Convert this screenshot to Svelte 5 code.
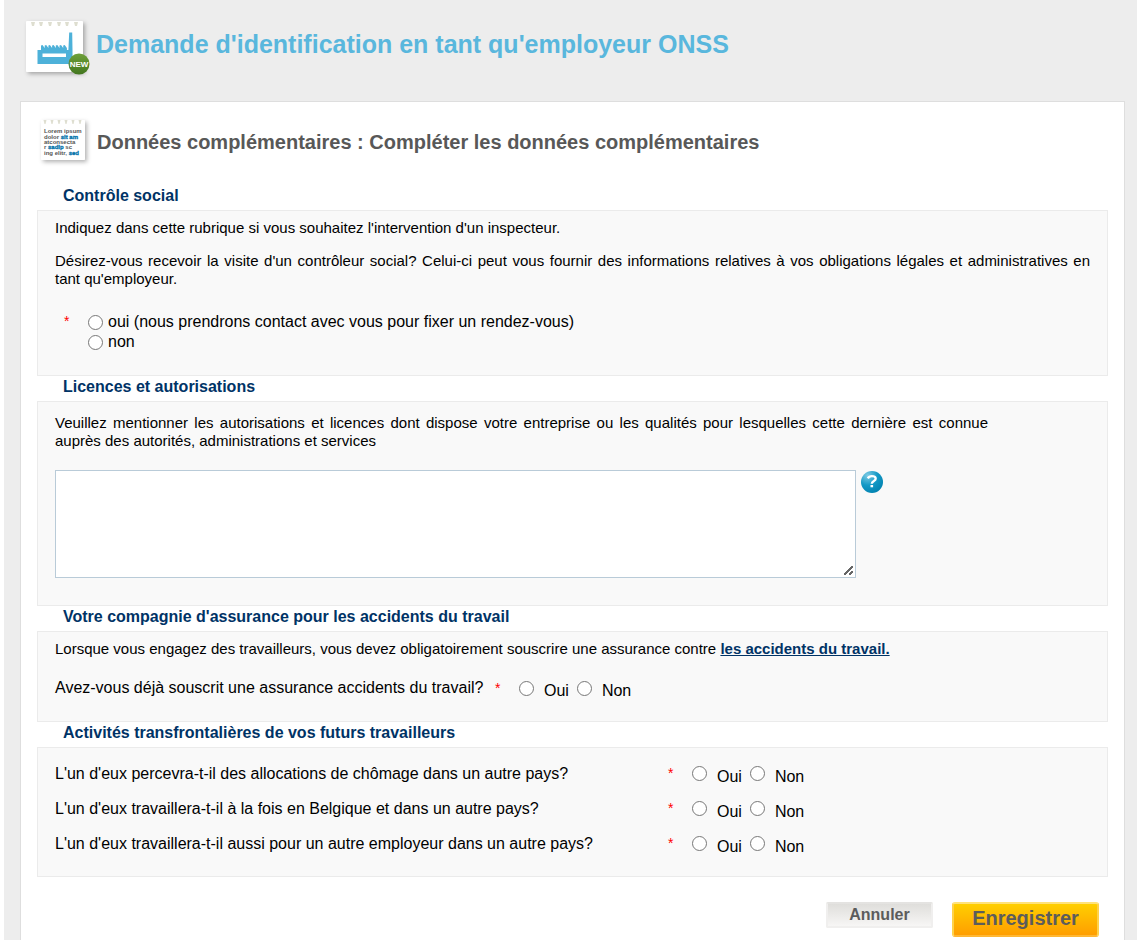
<script>
    const questions = [
        { id: "chomage", label: "L'un d'eux percevra-t-il des allocations de chômage dans un autre pays?" },
        { id: "belgique", label: "L'un d'eux travaillera-t-il à la fois en Belgique et dans un autre pays?" },
        { id: "employeur", label: "L'un d'eux travaillera-t-il aussi pour un autre employeur dans un autre pays?" },
    ];

    let visite = $state("");
    let licences = $state("");
    let assurance = $state("");
    let activites = $state({ chomage: "", belgique: "", employeur: "" });
</script>

<div class="page">
    <header>
        <svg class="page-icon" width="72" height="66" viewBox="0 0 72 66" aria-hidden="true">
            <defs>
                <linearGradient id="badge" x1="0" y1="0" x2="0" y2="1">
                    <stop offset="0" stop-color="#6fa03a" />
                    <stop offset="1" stop-color="#42761f" />
                </linearGradient>
                <filter id="shadow" x="-20%" y="-20%" width="150%" height="150%">
                    <feDropShadow dx="2" dy="2" stdDeviation="2" flood-opacity="0.3" />
                </filter>
            </defs>
            <rect x="6" y="7" width="57" height="51" rx="1" fill="#fff" filter="url(#shadow)" />
            <g fill="#deded0">
                {#each [13, 21, 30, 39, 47, 56] as x}
                    <path d="M{x - 2} 8h4l-1 4h-2z" />
                {/each}
            </g>
            <path
                fill="#4db1d9"
                fill-rule="evenodd"
                d="M17.500 50V36H21v-4.500l1.500-.5 2.200 3V31.500l1.500-.5 2.200 3V31.500l1.500-.5 2.200 3V31.500l1.500-.5 2.200 3V31.500l1.500-.5 2.200 3V31.500l1.500-.5 2.200 3V31.500l1.500-.5 2.200 3V36h1.500l.8-17.500h3L52.500 36v14zM22.500 39.500v3.500H46v-3.500z"
            />
            <circle cx="59" cy="50" r="10.500" fill="url(#badge)" />
            <text x="59" y="53" text-anchor="middle" class="badge-text">NEW</text>
        </svg>
        <h1>Demande d'identification en tant qu'employeur ONSS</h1>
    </header>

    <main>
        <div class="step">
            <svg width="58" height="54" viewBox="0 0 58 54" aria-hidden="true">
                <rect x="4" y="4" width="44" height="40" rx="1" fill="#fff" filter="url(#shadow)" />
                <g fill="#deded0">
                    {#each [8, 15, 22, 29, 36, 43] as x}
                        <path d="M{x - 1.5} 4h3l-1 4h-1z" />
                    {/each}
                </g>
                <g class="note">
                    <text x="7" y="17">Lorem ipsum</text>
                    <text x="7" y="23">dolor <tspan>sit am</tspan></text>
                    <text x="7" y="28">atconsecta</text>
                    <text x="7" y="33">r <tspan>sadip</tspan> sc</text>
                    <text x="7" y="39">ing elitr, <tspan>sed</tspan></text>
                </g>
            </svg>
            <h2>Données complémentaires : Compléter les données complémentaires</h2>
        </div>

        <form onsubmit={(e) => e.preventDefault()}>
            <h3 id="controle">Contrôle social</h3>
            <section class="controle">
                <p>Indiquez dans cette rubrique si vous souhaitez l'intervention d'un inspecteur.</p>
                <p class="demand">
                    Désirez-vous recevoir la visite d'un contrôleur social? Celui-ci peut vous fournir des informations
                    relatives à vos obligations légales et administratives en tant qu'employeur.
                </p>
                <div class="visit" role="radiogroup" aria-labelledby="controle">
                    <span class="star">*</span>
                    <div>
                        <label>
                            <input type="radio" name="visite" value="oui" bind:group={visite} />
                            <span>oui (nous prendrons contact avec vous pour fixer un rendez-vous)</span>
                        </label>
                        <label>
                            <input type="radio" name="visite" value="non" bind:group={visite} />
                            <span>non</span>
                        </label>
                    </div>
                </div>
            </section>

            <h3>Licences et autorisations</h3>
            <section class="licences">
                <label class="intro" for="licences">
                    Veuillez mentionner les autorisations et licences dont dispose votre entreprise ou les qualités pour
                    lesquelles cette dernière est connue auprès des autorités, administrations et services
                </label>
                <div class="area">
                    <textarea id="licences" bind:value={licences}></textarea>
                    <button type="button" class="help" aria-label="Aide">
                        <svg width="24" height="24" viewBox="0 0 24 24" aria-hidden="true">
                            <defs>
                                <radialGradient id="ball" cx="0.3" cy="0.2" r="0.9">
                                    <stop offset="0" stop-color="#7dcbe4" />
                                    <stop offset="0.5" stop-color="#1499c6" />
                                    <stop offset="1" stop-color="#0080ae" />
                                </radialGradient>
                            </defs>
                            <circle cx="12" cy="12" r="11" fill="url(#ball)" />
                            <path
                                d="M7.800 8.400C8.600 6.900 10 6.200 11.800 6.200c2.300 0 3.900.9 3.900 2.600 0 2.200-3.900 2.300-3.900 4.900"
                                fill="none"
                                stroke="#fff"
                                stroke-width="2.300"
                            />
                            <rect x="10.500" y="15" width="2.600" height="2.300" fill="#fff" />
                        </svg>
                    </button>
                </div>
            </section>

            <h3>Votre compagnie d'assurance pour les accidents du travail</h3>
            <section class="assurance">
                <p>
                    Lorsque vous engagez des travailleurs, vous devez obligatoirement souscrire une assurance contre
                    <a href="#accidents">les accidents du travail.</a>
                </p>
                <div class="inline" role="radiogroup" aria-labelledby="q-assurance">
                    <span id="q-assurance">Avez-vous déjà souscrit une assurance accidents du travail?</span>
                    <span class="star">*</span>
                    <div class="choices">
                        <label><input type="radio" name="assurance" value="oui" bind:group={assurance} /><span>Oui</span></label>
                        <label><input type="radio" name="assurance" value="non" bind:group={assurance} /><span>Non</span></label>
                    </div>
                </div>
            </section>

            <h3>Activités transfrontalières de vos futurs travailleurs</h3>
            <section class="activites">
                {#each questions as q (q.id)}
                    <div class="question" role="radiogroup" aria-labelledby="q-{q.id}">
                        <span id="q-{q.id}">{q.label}</span>
                        <span class="star">*</span>
                        <div class="choices">
                            <label><input type="radio" name={q.id} value="oui" bind:group={activites[q.id]} /><span>Oui</span></label>
                            <label><input type="radio" name={q.id} value="non" bind:group={activites[q.id]} /><span>Non</span></label>
                        </div>
                    </div>
                {/each}
            </section>

            <div class="actions">
                <button type="button" class="cancel">Annuler</button>
                <button type="submit" class="save">Enregistrer</button>
            </div>
        </form>
    </main>
</div>

<style>
    :global(body) {
        background: #fff;
        font-family: "Liberation Sans", Arial, sans-serif;
        color: #000;
    }

    * {
        box-sizing: border-box;
    }

    .page {
        display: flex;
        flex-direction: column;
        min-height: 100vh;
        margin-left: 4px;
        padding: 0 12px 0 16px;
        background: #ededed;
    }

    header {
        display: flex;
        height: 101px;
        padding-top: 14px;
    }

    h1,
    h2,
    h3,
    p {
        margin: 0;
    }

    h1 {
        padding-top: 15px;
        margin-left: 4px;
        font-size: 25px;
        line-height: 30px;
        color: #59b7dd;
    }

    .badge-text {
        font-size: 8px;
        font-weight: bold;
        fill: #fff;
    }

    main {
        flex: 1;
        padding: 14px 16px 3px;
        background: #fff;
        border: 1px solid #dedede;
        border-bottom: 0;
    }

    .step {
        display: flex;
        height: 69px;
    }

    h2 {
        padding-top: 14px;
        margin-left: 2px;
        font-size: 20px;
        line-height: 24px;
        color: #585858;
    }

    .note {
        font-size: 6px;
        font-weight: bold;
        fill: #555;
    }

    .note tspan {
        fill: #0072aa;
        stroke: #0072aa;
        stroke-width: 0.3px;
    }

    h3 {
        height: 25px;
        padding-left: 26px;
        font-size: 16px;
        line-height: 22px;
        color: #003366;
    }

    section {
        padding: 0 17px;
        background: #f9f9f9;
        border: 1px solid #ebebeb;
        font-size: 15px;
        line-height: 18px;
        text-align: justify;
    }

    .controle {
        padding-top: 8px;
        padding-bottom: 23px;
    }

    .demand {
        margin-top: 15px;
    }

    .star {
        font-size: 14px;
        color: #f00;
    }

    .visit {
        display: flex;
        margin-top: 24px;
        font-size: 16px;
    }

    .visit .star {
        width: 33px;
        padding-left: 9px;
    }

    .visit label {
        display: flex;
        align-items: center;
        gap: 5px;
        line-height: 20px;
    }

    input {
        flex: none;
        width: 15px;
        height: 15px;
        margin: 0;
    }

    .licences {
        padding-top: 12px;
        padding-bottom: 27px;
    }

    .intro {
        display: block;
        max-width: 933px;
    }

    .area {
        display: flex;
        align-items: flex-start;
        gap: 4px;
        margin-top: 20px;
    }

    textarea {
        width: 801px;
        height: 108px;
        border: 1px solid #b9cbd8;
        background: #fff;
        font: inherit;
    }

    textarea::-webkit-resizer {
        background:
            linear-gradient(135deg, transparent 42%, #666 42%, #666 56%, transparent 56%) 4px 4px / 9px 9px no-repeat,
            linear-gradient(135deg, transparent 36%, #666 36%, #666 66%, transparent 66%) 9px 9px / 4px 4px no-repeat;
    }

    .help {
        padding: 0;
        border: 0;
        background: none;
        cursor: pointer;
    }

    .help svg {
        display: block;
    }

    .assurance {
        padding-top: 8px;
        padding-bottom: 21px;
    }

    a {
        font-weight: bold;
        color: #003366;
    }

    .inline {
        display: grid;
        grid-template-columns: 440px 24px auto;
        margin-top: 21px;
        font-size: 16px;
    }

    .choices {
        display: flex;
        gap: 8px;
    }

    .choices label {
        display: flex;
        gap: 10px;
        font-size: 16px;
    }

    .choices input {
        margin-top: 2px;
    }

    .choices span {
        padding-top: 3px;
    }

    .activites {
        padding-top: 16px;
        padding-bottom: 7px;
    }

    .question {
        display: grid;
        grid-template-columns: 613px 24px auto;
        height: 35px;
        font-size: 16px;
        line-height: 20px;
    }

    .question .star {
        line-height: 18px;
    }

    .actions {
        display: flex;
        justify-content: flex-end;
        align-items: flex-start;
        gap: 19px;
        padding: 25px 9px 0 0;
    }

    .actions button {
        font-family: inherit;
        font-weight: bold;
        color: #5c5c5c;
        cursor: pointer;
    }

    .cancel {
        width: 107px;
        height: 26px;
        padding: 0;
        border: 2px solid #f0efee;
        border-top-color: #e4e3e1;
        border-radius: 2px;
        background: linear-gradient(#dfdedb, #f7f6f5);
        font-size: 16px;
        line-height: 20px;
    }

    .save {
        width: 147px;
        height: 35px;
        padding: 0 0 4px;
        border: 2px solid #ffd24a;
        border-top-color: #ffe27a;
        border-bottom-color: #ffb733;
        border-radius: 3px;
        background: linear-gradient(#ffcf00, #ff9e00);
        font-size: 20px;
        line-height: 26px;
    }
</style>
